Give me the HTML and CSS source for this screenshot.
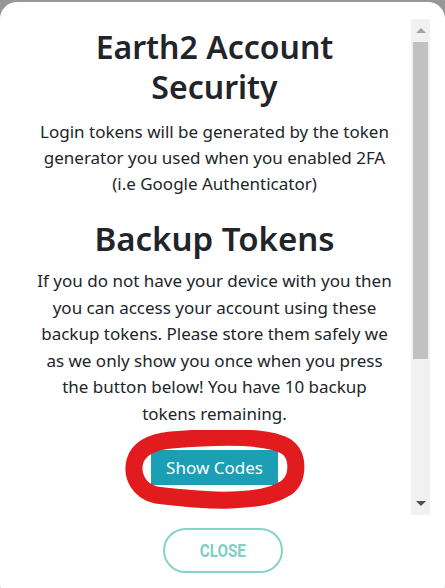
FILE: index.html
```html
<!DOCTYPE html>
<html lang="en">
<head>
    <meta charset="UTF-8">
    <meta name="viewport" content="width=device-width, initial-scale=1.0">
    <title>Earth2 Account Security</title>
    <link rel="stylesheet" href="styles.css">
</head>
<body>
    <div class="modal">
        <div class="modal-body">
            <div class="content">
                <h1 class="title">Earth2 Account Security</h1>
                <p class="text">Login tokens will be generated by the token generator you used when you enabled 2FA (i.e Google Authenticator)</p>
                <h2 class="subtitle">Backup Tokens</h2>
                <p class="text">If you do not have your device with you then you can access your account using these backup tokens. Please store them safely we as we only show you once when you press the button below! You have 10 backup tokens remaining.</p>
                <div class="codes-wrap">
                    <button type="button" class="btn-codes">Show Codes</button>
                    <!-- red marker scribbled around the button -->
                    <svg class="marker" width="200" height="90" viewBox="120 429 200 90">
                        <path d="M 170 439 C 230 434, 270 436, 286 446 C 298 455, 298 478, 285 487 C 270 496, 255 498, 230 499 C 205 500, 180 497, 155 494 C 138 490, 130 475, 134 460 C 138 447, 150 441, 170 439 Z" fill="none" stroke="#e11b1e" stroke-width="17" stroke-linejoin="round"/>
                    </svg>
                </div>
            </div>
            <div class="scrollbar">
                <div class="sb-btn"><span class="arrow-up"></span></div>
                <div class="sb-thumb"></div>
                <div class="sb-track"></div>
                <div class="sb-btn"><span class="arrow-down"></span></div>
            </div>
        </div>
        <div class="footer">
            <button type="button" class="btn-close"><span>CLOSE</span></button>
        </div>
    </div>
</body>
</html>
```

FILE: styles.css
```css
body {
    margin: 0;
    background-color: #979797;
    overflow: hidden;
    font-family: "Noto Sans", "Open Sans", sans-serif;
    color: #212529;
}

.modal {
    margin-top: 2px;
    height: 600px;
    background: white;
    border-radius: 17px;
    padding-top: 17px;
    box-sizing: border-box;
}

.modal-body {
    display: flex;
    height: 496px;
    padding-left: 18px;
    padding-right: 15px;
}

.content {
    flex: 1;
    overflow: hidden;
    text-align: center;
    padding: 0 17px;
}

.title {
    margin: 8px 0 12px;
    font-size: 32px;
    line-height: 40px;
    font-weight: 600;
}

.text {
    margin: 0;
    font-size: 17px;
    line-height: 26px;
}

.subtitle {
    margin: 20px 0 8px;
    font-size: 33px;
    line-height: 43px;
    font-weight: 600;
}

.subtitle + .text {
    line-height: 26.5px;
}

.codes-wrap {
    position: relative;
    display: inline-block;
    margin-top: 23px;
}

.btn-codes {
    display: block;
    width: 127px;
    height: 35px;
    border: none;
    background-color: #1c9fb5;
    color: white;
    font-family: "Noto Sans", sans-serif;
    font-size: 17px;
    padding: 0;
}

.marker {
    position: absolute;
    left: -30px;
    top: -20px;
    pointer-events: none;
}

.scrollbar {
    width: 19px;
    background: #f1f1f1;
    display: flex;
    flex-direction: column;
}

.sb-btn {
    height: 23px;
    display: flex;
    justify-content: center;
    align-items: center;
}

.arrow-up {
    border-left: 5px solid transparent;
    border-right: 5px solid transparent;
    border-bottom: 5px solid #a3a3a3;
}

.arrow-down {
    border-left: 5px solid transparent;
    border-right: 5px solid transparent;
    border-top: 5px solid #505050;
}

.sb-thumb {
    margin: 0 2px;
    height: 317px;
    background: #c1c1c1;
}

.sb-track {
    flex: 1;
}

.footer {
    display: flex;
    justify-content: center;
    padding-top: 13px;
}

.btn-close {
    width: 120px;
    height: 45px;
    border: 2px solid #86d3c8;
    border-radius: 23px;
    background: white;
    color: #7fcfc3;
    font-family: Roboto, sans-serif;
    font-weight: 700;
    font-size: 19px;
    padding: 0;
}

.btn-close span {
    display: inline-block;
    transform: scaleX(0.8);
}
```
